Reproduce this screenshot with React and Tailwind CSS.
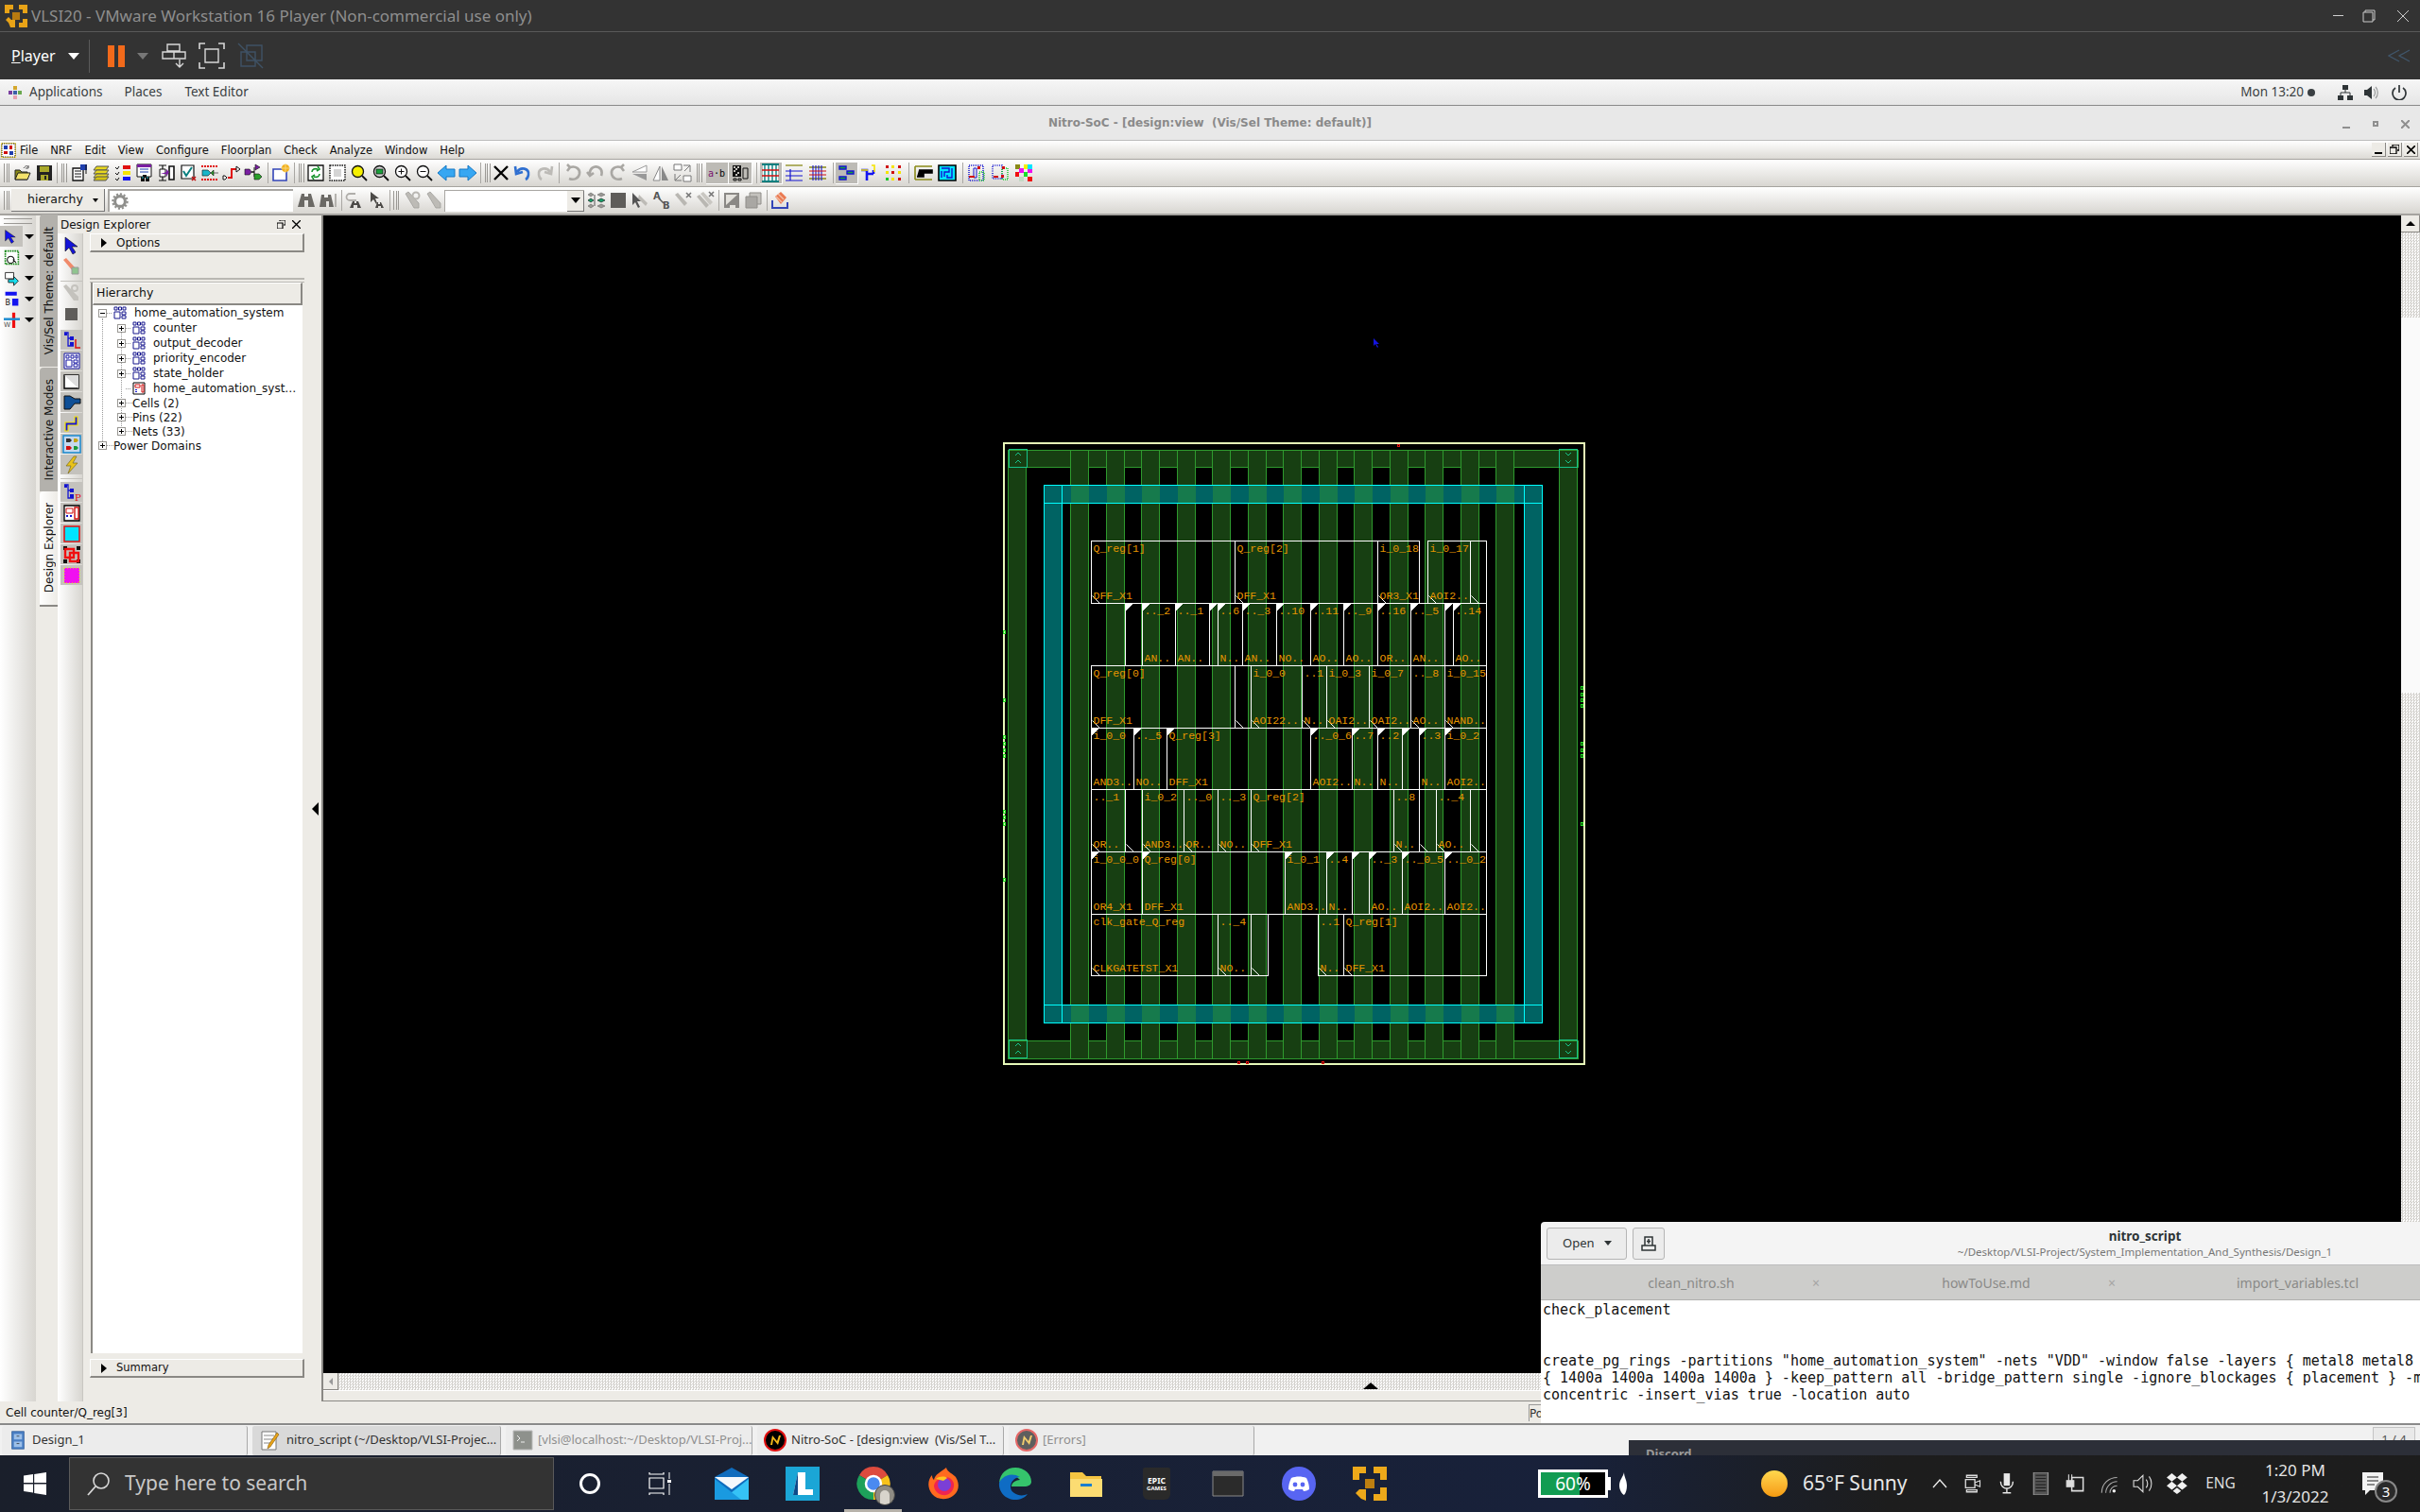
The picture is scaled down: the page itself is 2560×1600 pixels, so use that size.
// Nitro-SoC floorplan view running inside VMware Player, on a Windows desktop

const Svg = ({ s = 20, vb = "0 0 20 20", children, className = "" }) => (
  <svg width={s} height={s} viewBox={vb} className={`shrink-0 ${className}`}>{children}</svg>
);

const Lens = ({ fill = "#fff" }) => (
  <>
    <circle cx="8.5" cy="8.5" r="6" fill={fill} stroke="#111" strokeWidth="1.3" />
    <path d="M13 13l5 5" stroke="#111" strokeWidth="1.8" />
  </>
);

const Pencil = ({ c = "#bdbbb6" }) => (
  <path d="M3 3l3-2 11 12v5h-5z" fill={c} stroke="#a09e9a" strokeWidth="0.8" />
);

const tb = {
  open: <><path d="M2 7h5l2 2h6v8H2z" fill="#8a8a18" stroke="#222" /><path d="M2 17l3-7h13l-3 7z" fill="#f3e26c" stroke="#222" /><path d="M11 5c2-3 4-3 5-1M16 2v3h-3" fill="none" stroke="#555" /></>,
  save: <><path d="M2 2h16v16H2z" fill="#222" /><path d="M5 3h10v6H5z" fill="#a8a82a" /><path d="M6 12h8v6H6z" fill="#a8a82a" /><path d="M10 13h2v4h-2z" fill="#222" /></>,
  props: <><path d="M3 5h11v13H3z" fill="#fff" stroke="#111" strokeWidth="1.3" /><path d="M5 8h7M5 11h7M5 14h7" stroke="#111" /><path d="M11 1h7v6h-7z" fill="#1f3fae" /><path d="M17 1v10" stroke="#111" /></>,
  layers: <><path d="M5 3h13l-3 4H2z" fill="#e8d81e" stroke="#555" /><path d="M5 7h13l-3 4H2z" fill="#e8d81e" stroke="#555" /><path d="M5 11h13l-3 4H2z" fill="#e8d81e" stroke="#555" /><path d="M5 14h13l-3 4H2z" fill="#d4c414" stroke="#555" /></>,
  list: <><path d="M2 4l2 2 2-3M2 10l2 2 2-3M2 16l2 2 2-3" fill="none" stroke="#111" /><path d="M10 2h8v4h-8z" fill="#e01010" /><path d="M10 8h8v4h-8z" fill="#f5e400" /><path d="M10 14h8v4h-8z" fill="#1414f0" /></>,
  report: <><path d="M2 1h15v13H2z" fill="#fff" stroke="#111" /><path d="M2 1h15v3H2z" fill="#7a1fa2" /><path d="M5 6h9M5 9h9" stroke="#1f3fae" /><path d="M8 12h4v3H8zM6 14h4v5H6zM11 14h4v5h-4z" fill="#111" /><path d="M7 15h2M12 15h2" stroke="#19b6c9" /></>,
  module: <><path d="M2 2h8M2 18h8M6 2v16" stroke="#111" strokeWidth="1.2" /><path d="M3 6h6v8H3z" fill="#fff" stroke="#111" /><path d="M13 3h5v14h-5z" fill="#fff" stroke="#111" strokeWidth="1.6" /><path d="M4 11h6v3l3-5-3-3v3" fill="#7a1fa2" /></>,
  check: <><path d="M3 2h13v14H3z" fill="#fff" stroke="#111" strokeWidth="1.2" /><path d="M5 8l3 5 6-9" fill="none" stroke="#087f7f" strokeWidth="2" /><path d="M14 14l4 4m0-4l-4 4" stroke="#c01010" strokeWidth="1.5" /></>,
  clk: <><path d="M1 3h18M1 17h18" stroke="#e01010" strokeWidth="2" strokeDasharray="2 1" /><path d="M2 7h6l3 3-3 3H2z" fill="#19b6c9" stroke="#111" strokeWidth="0.6" /><path d="M11 10l3-3v6zM14 10h5" fill="#2aa02a" stroke="#111" strokeWidth="0.6" /></>,
  net: <><path d="M1 13h2l2 2-2 2H1z" fill="#fff" stroke="#111" /><path d="M6 15h4V6h6" fill="none" stroke="#e01010" strokeWidth="2" /><path d="M15 3l4 3-4 3z" fill="#fff" stroke="#111" /></>,
  gates: <><path d="M12 1l5 3-5 3z" fill="#7a1fa2" stroke="#111" strokeWidth="0.6" /><path d="M1 6h5l2 3-2 3H1z" fill="#7a1fa2" stroke="#111" strokeWidth="0.6" /><path d="M8 9h3V4M8 9h3v5" fill="none" stroke="#111" /><path d="M11 11h5l3 3-3 3h-5z" fill="#2aa02a" stroke="#111" strokeWidth="0.6" /></>,
  newobj: <><path d="M2 6h14v12H2z" fill="#fff" stroke="#3345b8" strokeWidth="1.6" /><circle cx="15" cy="5" r="4" fill="#f2b01e" /><path d="M15 0v10M10 5h10" stroke="#f7d67a" /></>,
  sync: <><path d="M2 2h16v16H2z" fill="#fff" stroke="#111" strokeWidth="1.3" /><path d="M6 9c0-3 3-4 6-3M12 3l2 3-3 2M14 11c0 3-3 4-6 3M8 17l-2-3 3-2" fill="none" stroke="#14932a" strokeWidth="1.6" /></>,
  chip: <><path d="M2 2h16v16H2z" fill="#fff" stroke="#111" strokeWidth="1.4" strokeDasharray="1.5 1" /><path d="M6 6h8v8H6z" fill="#d4d4d4" /></>,
  zy: <Lens fill="#f5f000" />,
  zg: <><Lens fill="#d8d8d8" /><path d="M5 6h7v5H5z" fill="#19a03a" stroke="#111" strokeWidth="0.7" /></>,
  zi: <><Lens /><path d="M5.5 8.5h6M8.5 5.5v6" stroke="#111" /></>,
  zo: <><Lens /><path d="M5.5 8.5h6" stroke="#111" /></>,
  left: <path d="M1 10l9-8v4h9v8h-9v4z" fill="#37a7f2" stroke="#1778c4" />,
  right: <path d="M19 10l-9-8v4H1v8h9v4z" fill="#37a7f2" stroke="#1778c4" />,
  x: <path d="M3 3l14 14M17 3L3 17" stroke="#000" strokeWidth="2.4" />,
  undo: <path d="M4 9c4-6 13-4 12 3-.3 2-1 4-3 5M2 3l1 8 7-2" fill="none" stroke="#2f6fd0" strokeWidth="2.6" />,
  redo: <path d="M16 9C12 3 3 5 4 12c.3 2 1 4 3 5M18 3l-1 8-7-2" fill="none" stroke="#bcbab6" strokeWidth="2.6" />,
  rot1: <path d="M6 4c6-2 11 2 10 7s-6 7-11 5M3 1l3 3-3 4" fill="none" stroke="#a9a7a3" strokeWidth="2.6" />,
  rot2: <path d="M4 12C3 5 9 2 13 4s4 6 3 9M1 9l3 4 4-3" fill="none" stroke="#a9a7a3" strokeWidth="2.6" />,
  rot3: <path d="M14 4C8 2 3 6 4 11s6 7 11 5M17 1l-3 3 3 4" fill="none" stroke="#a9a7a3" strokeWidth="2.6" />,
  flipv: <><path d="M18 2L3 9h15z" fill="#fff" stroke="#999" /><path d="M18 18L3 11h15z" fill="#999" /></>,
  fliph: <><path d="M9 3L2 18h7z" fill="#fff" stroke="#888" /><path d="M11 3l7 15h-7z" fill="#888" /></>,
  resize: <><path d="M1 1h8v6H1zM11 13h8v6h-8z" fill="#fff" stroke="#777" /><path d="M11 2h7v7M18 2l-6 6M2 11v7h7M2 18l6-6" fill="none" stroke="#777" /></>,
  ab: <text x="10" y="14" textAnchor="middle" fontFamily="'DejaVu Sans Mono',monospace" fontSize="10" fill="#000"><tspan fill="#7a1070">a</tspan>·b</text>,
  cell: <><path d="M2 2h9v12H2z" fill="#111" strokeDasharray="1 1" /><path d="M3 3h2v2H3zM7 3h2v2H7zM5 5h2v2H5zM3 7h2v2H3zM7 9h2v2H7zM5 11h2v2H5z" fill="#c4c2bd" /><path d="M13 5h5v11h-5zM3 16h3v2H3zM8 16h3v2H8z" fill="none" stroke="#111" /></>,
  grid: <><path d="M2 1h16v18H2z" fill="#fff" /><path d="M4 1v18M8 1v18M12 1v18M16 1v18" stroke="#087f7f" strokeWidth="1.4" /><path d="M1 1h18M1 19h18" stroke="#087f7f" strokeWidth="2" /><path d="M1 7h18M1 13h18" stroke="#d01010" strokeWidth="1.3" /></>,
  routes: <><path d="M1 2h18" stroke="#8a8a18" strokeWidth="1.3" /><path d="M1 8h5V6M6 8h13M1 13h18M1 18h18M6 8v10" fill="none" stroke="#1414d0" strokeWidth="1.2" /></>,
  ww: <><path d="M1 4h18M1 16h18" stroke="#8a8a18" strokeWidth="1.3" /><path d="M5 2v16M8 2v16M11 2v16M14 2v16" stroke="#1414d0" strokeWidth="1.1" /><path d="M1 8h18M1 12h18" stroke="#d01010" strokeWidth="1" /></>,
  conn: <><path d="M3 3h7v3H3zM11 8h7v3h-7zM3 14h7v3H3z" fill="#19a03a" stroke="#1414d0" strokeWidth="1.4" /></>,
  wire: <><path d="M1 7h6v11M7 11h7M14 11V7" fill="none" stroke="#1414f0" strokeWidth="2.6" /><path d="M12 2h3v7M1 7h7" fill="none" stroke="#f5e400" strokeWidth="1.6" /></>,
  dots: <><path d="M2 2h3v3H2zM15 2h3v3h-3zM8 8h3v3H8zM15 15h3v3h-3z" fill="#d01010" /><path d="M8 2h3v3H8zM2 8h3v3H2zM15 8h3v3h-3zM8 15h3v3H8z" fill="#f5e400" /><path d="M2 15h3v3H2z" fill="#19c82a" /></>,
  pg: <><path d="M1 3h18M1 17h18M1 3v14" fill="none" stroke="#8a8a18" strokeWidth="1.6" /><path d="M5 7h14v3H10v4H3" fill="#000" stroke="#000" strokeWidth="1.6" /></>,
  maze: <><path d="M1 2h18v16H1z" fill="#00e5ff" stroke="#000" strokeWidth="1.6" /><path d="M4 5h8v4H7v5M15 5v10H10V12M4 8v7" fill="none" stroke="#1414d0" strokeWidth="1.4" /></>,
  d1: <><path d="M2 2h15v16H2z" fill="none" stroke="#1414d0" strokeWidth="1.5" strokeDasharray="1 1" /><path d="M7 5h3v10H7z" fill="none" stroke="#1414d0" /><path d="M2 13h6v2H2zM11 3h3v3h-3z" fill="#d01010" /><path d="M13 9h5v9h-5z" fill="none" stroke="#19c82a" strokeDasharray="1 1" strokeWidth="1.5" /></>,
  d2: <><path d="M2 2h10v14H2z" fill="none" stroke="#1414d0" strokeWidth="1.5" strokeDasharray="1 1.3" /><path d="M12 5h6v12h-6z" fill="none" stroke="#19c82a" strokeWidth="1.5" strokeDasharray="1 1" /><path d="M12 3h3v3h-3zM3 13h5v2H3zM11 12h3v3h-3z" fill="#d01010" /></>,
  colors: <><path d="M1 1h5v5H1z" fill="#8a8a18" /><path d="M10 1h4v5h-4z" fill="#f5f000" /><path d="M14 1h5v5h-5z" fill="#00e5ff" /><path d="M5 5h5v5H5zM14 6h5v4h-5z" fill="#f010f0" /><path d="M1 9h4v5H1zM14 14h5v5h-5z" fill="#f01010" /><path d="M10 9h4v5h-4z" fill="#19e02a" /><path d="M5 14h5v5H5z" fill="#c4d8c4" /></>,
  gear: <><circle cx="10" cy="10" r="6" fill="none" stroke="#8f8f8c" strokeWidth="3.4" /><circle cx="10" cy="10" r="8.5" fill="none" stroke="#8f8f8c" strokeWidth="2.4" strokeDasharray="2.4 2" /></>,
  bin: <path d="M5 3h3v3h4V3h3l4 14h-7v-7H8v7H1z" fill="#6b6965" />,
  bin2: <><path d="M3 4h3v3h4V4h3l3 13h-5v-6H8v6H1z" fill="#6b6965" /><path d="M17 3h2v14h-2z" fill="#b4b2ae" /></>,
  loopb: <><path d="M11 3H5a3 3 0 000 7h7" fill="none" stroke="#b0aeaa" strokeWidth="1.8" /><path d="M8 11h2v2h2v-2h2l3 7h-4v-3h-4v3H5z" fill="#4c4a47" /></>,
  arrb: <><path d="M3 1v11l3-3 3 5 1-1-2-5h4z" fill="#4c4a47" /><path d="M10 12h1v2h2v-2h1l3 6h-3v-2h-3v2H8z" fill="#4c4a47" /></>,
  pg1: <><Pencil /><circle cx="14" cy="5" r="3.5" fill="none" stroke="#b9b7b2" strokeWidth="2" /></>,
  pg2: <Pencil />,
  neteye: <><path d="M1 4l3-2 3 2-3 2zM11 4l4-2 4 2-4 2zM1 16l3-2 3 2-3 2zM11 16l4-2 4 2-4 2z" fill="#9a9894" stroke="#555" strokeWidth="0.5" /><path d="M1 10l3-2 3 2-3 2z" fill="#19a06a" stroke="#111" strokeWidth="0.6" /><path d="M11 10l4-2 4 2-4 2z" fill="#19a06a" stroke="#111" strokeWidth="0.6" /><path d="M8 4v12" stroke="#555" /></>,
  stop: <path d="M2 2h16v16H2z" fill="#5f5d5a" />,
  selp: <><path d="M9 4l9 9-2 3-8-8z" fill="#bdbbb6" /><path d="M2 2v13l3-3 3 6 2-1-3-6h4z" fill="#555" /></>,
  abt: <><text x="1" y="9" fontSize="10" fontWeight="700" fill="#555" fontFamily="'DejaVu Sans',sans-serif">A</text><text x="11" y="19" fontSize="10" fontWeight="700" fill="#555" fontFamily="'DejaVu Sans',sans-serif">B</text><path d="M7 8l5 5" stroke="#555" strokeWidth="1.4" /></>,
  px: <><path d="M1 4l3-2 10 11-3 3z" fill="#b9b7b2" /><path d="M13 2l5 5m0-5l-5 5" stroke="#777" strokeWidth="1.6" /></>,
  pxx: <><path d="M1 6l3-2 10 11-3 3z" fill="#b9b7b2" /><path d="M5 3l3-2 10 11-3 3z" fill="#c9c7c2" /><path d="M14 1l5 5m0-5l-5 5" stroke="#777" strokeWidth="1.6" /></>,
  sg: <><path d="M2 2h16v16H2z" fill="#8a8885" /><path d="M4 4h12L4 15z" fill="#e4e2dd" /><path d="M8 15h6v3H8z" fill="#e4e2dd" /></>,
  cg: <><path d="M6 2h12v12H6z" fill="#c4c2bd" stroke="#8f8d89" /><path d="M2 6h12v12H2z" fill="#a9a7a3" stroke="#8f8d89" /></>,
  paint: <><path d="M2 10v8h16v-6" fill="none" stroke="#3345b8" strokeWidth="2" /><path d="M5 6l6-5 6 6-6 7z" fill="#ea7a52" /><path d="M8 3l6 6M6 6l6 6" stroke="#f2c0a8" strokeWidth="1.3" /></>,
};

const Ic = ({ n, on = false, className = "w-[23px]" }) => (
  <div className={`h-[23px] flex items-center justify-center shrink-0 ${className} ${on ? "bg-[#bdbbb6] border-r border-b border-white" : ""}`}>
    <Svg>{tb[n]}</Svg>
  </div>
);

const Handle = ({ className = "" }) => (
  <div className={`h-[20px] w-[6px] shrink-0 flex justify-between border-x border-[#9a9894] ${className}`}>
    <div className="w-px h-full bg-[#9a9894] mx-auto" />
  </div>
);

const VSep = ({ className = "" }) => <div className={`w-px h-[22px] bg-[#a9a7a3] shrink-0 ${className}`} />;

const menus = ["File", "NRF", "Edit", "View", "Configure", "Floorplan", "Check", "Analyze", "Window", "Help"];

function Vmware() {
  return (
    <div className="bg-[#333333] font-['Noto_Sans',sans-serif] shrink-0">
      <div className="h-[34px] flex items-center pl-[4px] border-b border-[#595959]">
        <Svg s={26} vb="0 0 26 26">
          <path d="M1 1h9v5H6v4H1zM25 1h-9v5h4v4h5zM25 25h-9v-5h4v-4h5zM7 25h5v-8H8l-3-3-3 3 3 3z" fill="#e8a317" />
          <path d="M9 9h8v8H9z" fill="#b87a10" />
        </Svg>
        <div className="ml-[3px] mt-[1px] text-[17px] text-[#8e8e8e] whitespace-nowrap">VLSI20 - VMware Workstation 16 Player (Non-commercial use only)</div>
        <div className="ml-auto flex items-center pr-[12px]">
          <div className="w-[11px] h-px bg-[#d0d0d0] mr-[20px]" />
          <Svg s={14} vb="0 0 14 14" className="mr-[23px]"><path d="M3 3V1h10v10h-2M1 3h10v10H1z" fill="none" stroke="#ccc" /></Svg>
          <Svg s={12} vb="0 0 12 12"><path d="M0 0l12 12M12 0L0 12" stroke="#ccc" /></Svg>
        </div>
      </div>
      <div className="h-[50px] flex items-center pl-[12px]">
        <span className="text-[16px] text-white w-[46px] whitespace-nowrap"><span className="underline">P</span>layer</span>
        <div className="ml-[14px] w-0 h-0 border-x-[6px] border-x-transparent border-t-[7px] border-t-white" />
        <div className="ml-[10px] w-px h-[35px] bg-[#5a5a5a]" />
        <div className="ml-[19px] w-[7px] h-[23px] bg-[#f26a1b]" />
        <div className="ml-[4px] w-[7px] h-[23px] bg-[#f26a1b]" />
        <div className="ml-[13px] w-0 h-0 border-x-[6px] border-x-transparent border-t-[7px] border-t-[#777]" />
        <Svg s={26} vb="0 0 26 26" className="ml-[14px]"><path d="M6 1h13v7H6zM1 9h12v7H1zM13 9h12v7H13zM19 17v7M15 21l4 4 4-4" fill="none" stroke="#d8d8d8" strokeWidth="1.4" /></Svg>
        <Svg s={28} vb="0 0 28 28" className="ml-[13px]"><path d="M7 1H1v6M21 1h6v6M7 27H1v-6M21 27h6v-6" fill="none" stroke="#d8d8d8" strokeWidth="1.6" /><path d="M7 7h14v14H7z" fill="none" stroke="#d8d8d8" strokeWidth="1.4" /></Svg>
        <Svg s={28} vb="0 0 28 28" className="ml-[13px]"><path d="M10 3h16v16H10zM4 10h15v15H4z" fill="none" stroke="#3f5265" strokeWidth="1.4" /><path d="M1 1l26 26" stroke="#3f5265" strokeWidth="1.4" /></Svg>
        <Svg s={24} vb="0 0 24 14" className="ml-auto mr-[10px]"><path d="M12 1L1 7l11 6M23 1L12 7l11 6" fill="none" stroke="#40566b" strokeWidth="1.3" /></Svg>
      </div>
    </div>
  );
}

function GnomeBar() {
  return (
    <div className="shrink-0">
      <div className="h-[28px] flex items-center bg-linear-to-b from-[#f6f6f6] to-[#e6e6e6] border-b border-[#8a8a8a] pl-[8px] pr-[14px] text-[13.5px] text-[#3a3f42] font-['Noto_Sans',sans-serif]">
        <Svg s={16} vb="0 0 16 16"><path d="M6 1h4v4H6z" fill="#d4a72c" /><path d="M1 6h4v4H1z" fill="#7a3fa0" /><path d="M11 6h4v4h-4z" fill="#6aa84f" /><path d="M6 11h4v4H6z" fill="#e8a0b0" /><path d="M6 6h4v4H6z" fill="#3d5fa8" /></Svg>
        <span className="ml-[7px]">Applications</span>
        <span className="ml-[23px]">Places</span>
        <span className="ml-[24px]">Text Editor</span>
        <span className="ml-auto">Mon 13:20</span>
        <div className="w-[8px] h-[8px] rounded-full bg-[#3a3f42] ml-[4px]" />
        <Svg s={16} vb="0 0 16 16" className="ml-[24px]"><path d="M5 0h6v5H5zM0 11h6v5H0zM10 11h6v5h-6z" fill="#2e3436" /><path d="M8 5v3M3 11V8h10v3" fill="none" stroke="#2e3436" /></Svg>
        <Svg s={16} vb="0 0 16 16" className="ml-[12px]"><path d="M0 5h3l5-4v14l-5-4H0z" fill="#2e3436" /><path d="M10 4c2 2 2 6 0 8M12 2c3 3 3 9 0 12" fill="none" stroke="#9a9c9c" strokeWidth="1.2" /></Svg>
        <Svg s={16} vb="0 0 16 16" className="ml-[13px]"><path d="M4 3a7 7 0 108 0M8 0v8" fill="none" stroke="#2e3436" strokeWidth="1.7" /></Svg>
      </div>
      <div className="h-[37px] relative flex items-center justify-center bg-[#e8e8e8] border-b border-[#bdbdbd] font-['DejaVu_Sans',sans-serif] text-[12px] font-bold text-[#8a8a8a] whitespace-pre">
        Nitro-SoC - [design:view  (Vis/Sel Theme: default)]
        <div className="absolute right-[11px] top-[14px] flex items-center gap-[24px]">
          <div className="w-[8px] h-[2px] bg-[#8f8f8f] mt-[8px]" />
          <div className="w-[6px] h-[6px] border-2 border-[#8f8f8f]" />
          <Svg s={9} vb="0 0 9 9"><path d="M0 0l9 9M9 0L0 9" stroke="#8f8f8f" strokeWidth="2" /></Svg>
        </div>
      </div>
    </div>
  );
}

function WinBtn({ children }) {
  return <div className="w-[15px] h-[15px] bg-[#edebe6] border-r border-b border-[#8a8884] flex items-center justify-center">{children}</div>;
}

function AppBars() {
  return (
    <div className="shrink-0 font-['DejaVu_Sans',sans-serif] text-[#111]">
      <div className="h-[20px] flex items-center bg-linear-to-b from-white to-[#dcdad5] border-b border-[#a5a39f] pl-[1px]">
        <Svg s={16} vb="0 0 16 16">
          <path d="M0 0h16v16H0z" fill="#f2dc5a" /><path d="M1 1h14v14H1z" fill="#fff" stroke="#111" strokeDasharray="1 1" /><path d="M3 3h4v4H3zM9 9h4v4H9z" fill="#1f3fae" /><path d="M9 3h3v4H9zM3 9h4v3H3z" fill="#d01010" />
        </Svg>
        <div className="flex text-[11.5px] leading-none ml-[4px] pt-[2px]">
          {menus.map((m, i) => <span key={m} className={`whitespace-nowrap ${i === 0 ? "" : "ml-[13px]"}`}>{m}</span>)}
        </div>
        <div className="ml-auto flex gap-[2px] pr-[2px]">
          <WinBtn><div className="w-[8px] h-[2px] bg-black mt-[7px]" /></WinBtn>
          <WinBtn><Svg s={10} vb="0 0 10 10"><path d="M3 2V0h7v6H8M0 3h7v7H0z" fill="none" stroke="#000" strokeWidth="1.3" /></Svg></WinBtn>
          <WinBtn><Svg s={9} vb="0 0 9 9"><path d="M0 0l9 9M9 0L0 9" stroke="#000" strokeWidth="1.6" /></Svg></WinBtn>
        </div>
      </div>
      <div className="h-[29px] flex items-center bg-linear-to-b from-white to-[#d8d6d1] border-b border-[#a5a39f] pl-[4px]">
        <Handle />
        <div className="w-px ml-[1.5px]" />
        <Ic n="open" /><Ic n="save" />
        <VSep className="ml-[1px]" />
        <Handle className="ml-[4px]" />
        <Ic n="props" className="w-[23px] ml-[2px]" /><Ic n="layers" /><Ic n="list" /><Ic n="report" /><Ic n="module" /><Ic n="check" /><Ic n="clk" /><Ic n="net" /><Ic n="gates" />
        <VSep className="ml-[3px] mr-[2px]" /><Ic n="newobj" />
        <VSep className="ml-[2px]" />
        <Handle className="ml-[4px]" />
        <Ic n="sync" className="w-[23px] ml-[1px]" /><Ic n="chip" /><Ic n="zy" /><Ic n="zg" /><Ic n="zi" /><Ic n="zo" /><Ic n="left" /><Ic n="right" />
        <VSep className="ml-[1px]" />
        <Handle className="ml-[4px]" />
        <Ic n="x" /><Ic n="undo" /><Ic n="redo" />
        <VSep className="ml-[3px] mr-[4px]" />
        <Ic n="rot1" /><Ic n="rot2" /><Ic n="rot3" /><Ic n="flipv" /><Ic n="fliph" /><Ic n="resize" />
        <Handle className="ml-[3px]" />
        <Ic n="ab" on className="w-[24px] ml-[4px]" /><Ic n="cell" on className="w-[25px]" />
        <VSep className="ml-[4px] mr-[3px]" />
        <Ic n="grid" on className="w-[24px]" /><Ic n="routes" className="w-[25px]" /><Ic n="ww" className="w-[25px]" />
        <VSep className="ml-[3px] mr-[2px]" />
        <Ic n="conn" on className="w-[24px]" /><Ic n="wire" className="w-[25px]" /><Ic n="dots" className="w-[25px]" />
        <VSep className="ml-[3px] mr-[3px]" />
        <Ic n="pg" className="w-[25px]" /><Ic n="maze" className="w-[25px]" />
        <VSep className="ml-[3px] mr-[2px]" />
        <Ic n="d1" className="w-[25px]" /><Ic n="d2" className="w-[25px]" /><Ic n="colors" className="w-[25px]" />
      </div>
      <div className="h-[30px] flex items-center bg-linear-to-b from-white to-[#d8d6d1] border-b-2 border-[#a5a39f] pl-[4px]">
        <Handle />
        <div className="ml-[2px] w-[99px] h-[24px] bg-[#edebe6] border-r border-b border-[#777] flex items-center text-[12.5px] pl-[17px] pr-[6px]">
          <span>hierarchy</span>
          <div className="ml-auto w-0 h-0 border-x-[3px] border-x-transparent border-t-[4px] border-t-black" />
        </div>
        <div className="ml-[3px] w-[196px] h-[24px] bg-white border-t-2 border-l-2 border-[#a9a7a3] flex items-center pl-[2px]">
          <Svg s={18}>{tb.gear}</Svg>
        </div>
        <Ic n="bin" className="w-[23px] ml-[2px]" /><Ic n="bin2" />
        <VSep className="ml-[3px]" />
        <Ic n="loopb" className="w-[25px]" /><Ic n="arrb" className="w-[24px]" />
        <VSep className="ml-[1px]" />
        <Handle className="ml-[3px]" />
        <Ic n="pg1" className="w-[23px] ml-[2px]" /><Ic n="pg2" />
        <div className="w-[148px] h-[23px] bg-white border-t border-l border-[#a9a7a3] flex justify-end">
          <div className="w-[18px] bg-[#edebe6] border-r border-b border-[#777] flex items-center justify-center">
            <div className="w-0 h-0 border-x-[5px] border-x-transparent border-t-[6px] border-t-black" />
          </div>
        </div>
        <Ic n="neteye" className="w-[25px]" /><Ic n="stop" className="w-[22px]" /><Ic n="selp" /><Ic n="abt" /><Ic n="px" /><Ic n="pxx" />
        <VSep className="ml-[3px]" />
        <Ic n="sg" className="w-[23px] ml-[1px]" /><Ic n="cg" />
        <VSep className="ml-[3px]" />
        <Ic n="paint" className="w-[25px]" />
      </div>
    </div>
  );
}

const sideTools = [
  <><path d="M2 2v14l4-4 4 7 3-2-4-6h6z" fill="#1414f0" stroke="#111" strokeWidth="0.6" /></>,
  <><path d="M2 2h17v17H2z" fill="#fff" stroke="#1a8a1a" strokeDasharray="2 1" strokeWidth="2" /><path d="M9 9a4.5 4.5 0 10.01 0M12 13l4 4" fill="none" stroke="#111" strokeWidth="1.3" /></>,
  <><path d="M2 3h11v8H2z" fill="#fff" stroke="#111" /><path d="M6 12h7V8l6 6-6 6v-4H6z" fill="#19e0f0" stroke="#111" /></>,
  <><path d="M2 1h15v5H2zM11 10h8v9h-8z" fill="#1414f0" /><text x="2" y="18" fontSize="10" fill="#111" fontFamily="'DejaVu Sans',sans-serif">B</text></>,
  <><path d="M11 1h4v20h-4z" fill="#f01010" /><path d="M0 8h21v3H0z" fill="#1a8ad0" /><text x="0" y="20" fontSize="9" fill="#555" fontFamily="'DejaVu Sans',sans-serif">W</text></>,
];

const exPlain = [
  <path d="M3 1v15l4-4 4 7 3-2-4-6h6z" fill="#1414d8" stroke="#111" strokeWidth="0.6" />,
  <><path d="M1 3l3-2 11 12-3 3z" fill="#f08a6a" /><path d="M10 11h7v7h-7z" fill="#8fc48f" stroke="#999" /></>,
  <><path d="M1 3l3-2 13 13v4h-5z" fill="#c4c2bd" /><circle cx="13" cy="5" r="3" fill="none" stroke="#c4c2bd" strokeWidth="2" /></>,
  <path d="M3 3h13v13H3z" fill="#5f5d5a" />,
];

const exBoxed = [
  <><path d="M2 2h4v14h6M6 8h6" fill="none" stroke="#1414d0" strokeWidth="1.3" /><path d="M2 2h3v3H2zM8 6h4v4H8zM8 12h4v4H8z" fill="#1414d0" /><path d="M14 9v9h5" fill="none" stroke="#e01010" strokeWidth="1.5" /></>,
  <><path d="M2 2h16v16H2z" fill="#fff" stroke="#1414a0" /><path d="M4 4h3v3H4zM9 4h3v3H9zM14 4h2v3h-2zM4 9h6v7H4zM12 9h4v3h-4zM12 13h4v3h-4z" fill="none" stroke="#1414a0" /></>,
  <><path d="M2 3h15v14H2z" fill="#fff" stroke="#000" strokeWidth="1.4" /><path d="M2 3l15 14V3z" fill="#ddd" /></>,
  <path d="M2 3h6l5 3h6v5h-6l-5 6H2z" fill="#0f4f96" stroke="#111" />,
  <path d="M3 18V9h10V3h3v9H6v6z" fill="#1414e0" stroke="#f5e400" strokeWidth="1.2" />,
  <><path d="M1 1h18v18H1z" fill="#c5d8ee" stroke="#1a8ad0" strokeWidth="1.5" /><path d="M4 4h4l2 2-2 2H4z" fill="#333" /><path d="M12 4h3l2 2-2 2h-3z" fill="#c4a214" /><path d="M4 12h4l2 2-2 2H4z" fill="#d01010" /><path d="M12 12h3l2 2-2 2h-3z" fill="#1a9a3a" /></>,
  <path d="M12 1L4 11h5l-3 8 10-11h-5l4-7z" fill="#e8c21a" stroke="#7a6a1a" strokeWidth="0.7" />,
];

const exBoxed2 = [
  <><path d="M2 2h4v14h6M6 8h6" fill="none" stroke="#1414d0" strokeWidth="1.3" /><path d="M2 2h3v3H2zM8 6h4v4H8zM8 12h4v4H8z" fill="#1414d0" /><text x="13" y="19" fontSize="10" fill="#e01010" fontFamily="'DejaVu Serif',serif">P</text></>,
  <><path d="M2 2h16v16H2z" fill="#fff" stroke="#000" strokeWidth="1.3" /><path d="M4 5h7v5H4z" fill="none" stroke="#d01010" /><path d="M13 4h4v12h-4z" fill="none" stroke="#d01010" strokeWidth="1.4" /><path d="M4 12h2v2H4zM8 12h2v2H8z" fill="#1414d0" /></>,
  <path d="M2 2h16v16H2z" fill="#00e5ff" stroke="#e01010" strokeWidth="1.5" />,
  <><path d="M1 1h4v4H1zM15 1h4v4h-4zM1 15h4v4H1zM15 15h4v4h-4z" fill="#111" /><path d="M3 4h9v9H3zM8 8h9v9H8z" fill="none" stroke="#f01010" strokeWidth="2.4" /></>,
  <path d="M2 2h16v16H2z" fill="#f010f0" stroke="#f5e400" strokeDasharray="1 2" />,
];

const Bevel = ({ className = "", children }) => (
  <div className={`bg-[#edebe6] border-t border-l border-white border-r-2 border-b-2 border-r-[#8a8884] border-b-[#8a8884] flex items-center ${className}`}>{children}</div>
);

const Expander = ({ open = false }) => (
  <div className="w-[9px] h-[9px] border border-[#9a9894] bg-white relative shrink-0">
    <div className="absolute left-[1px] top-[3px] w-[5px] h-px bg-black" />
    {!open && <div className="absolute left-[3px] top-[1px] w-px h-[5px] bg-black" />}
  </div>
);

const ModIcon = () => (
  <Svg s={14} vb="0 0 14 14"><path d="M1 1h3v3H1zM5.5 1h3v3h-3zM10 1h3v3h-3zM1 6h6v7H1zM9 6h4v3H9zM9 10h4v3H9z" fill="#fff" stroke="#14148c" /></Svg>
);

const TreeRow = ({ pad, exp, icon, h, children, open, leaf }) => (
  <div className={`flex items-center whitespace-nowrap ${pad} ${h}`}>
    {exp && <Expander open={open} />}
    {leaf && <div className="w-[9px]" />}
    <div className={icon ? "w-[5px] h-px mr-[1px] border-t border-dotted border-[#999]" : "w-[7px] border-t border-dotted border-[#999]"} />
    {icon && <div className="ml-[1px] mr-[8px] flex">{icon}</div>}
    <span>{children}</span>
  </div>
);

function Explorer() {
  return (
    <div className="w-[261px] h-full flex flex-col font-['DejaVu_Sans',sans-serif] text-[12px] text-[#111]">
      <div className="h-[19px] flex items-center pl-[3px] bg-[#edebe6]">
        <span>Design Explorer</span>
        <Svg s={9} vb="0 0 9 9" className="ml-auto mr-[7px]"><path d="M3 1V0h6v5H7M0 3h6v6H0z" fill="none" stroke="#000" strokeWidth="1.2" /></Svg>
        <Svg s={9} vb="0 0 9 9" className="mr-[4px]"><path d="M0 0l9 9M9 0L0 9" stroke="#000" strokeWidth="1.3" /></Svg>
      </div>
      <div className="flex-1 flex min-h-0 bg-[#edebe6]">
        <div className="w-[27px] flex flex-col items-center bg-linear-to-r from-white to-[#d8d6d1] border-r border-[#c9c7c2] pl-[3px]">
          <div className="h-[23px] mt-[1px] flex items-center"><Svg>{exPlain[0]}</Svg></div>
          <div className="h-[22px] flex items-center"><Svg>{exPlain[1]}</Svg></div>
          <div className="w-full h-px bg-[#c4c2bd] mt-[4px]" />
          <div className="h-[24px] flex items-center"><Svg>{exPlain[2]}</Svg></div>
          <div className="h-[22px] flex items-center"><Svg>{exPlain[3]}</Svg></div>
          <div className="h-[5px]" />
          {exBoxed.map((g, i) => (
            <div key={i} className="w-[23px] h-[21px] mb-px bg-[#c4c2bd] flex items-center justify-center"><Svg>{g}</Svg></div>
          ))}
          <div className="w-full h-px bg-[#c4c2bd] my-[3px]" />
          {exBoxed2.map((g, i) => (
            <div key={i} className="w-[23px] h-[21px] mb-px bg-[#c4c2bd] flex items-center justify-center"><Svg>{g}</Svg></div>
          ))}
        </div>
        <div className="flex-1 pl-[7px] flex flex-col min-w-0 pb-[25px]">
          <Bevel className="h-[20px] pl-[11px] shrink-0">
            <div className="w-0 h-0 border-y-[5px] border-y-transparent border-l-[6px] border-l-black" />
            <span className="ml-[10px]">Options</span>
          </Bevel>
          <div className="h-[29px] shrink-0 border-b-2 border-[#b9b7b2]" />
          <div className="h-[3px] shrink-0 border-b border-[#b9b7b2]" />
          <div className="ml-[1px] mr-[2px] flex-1 min-h-0 flex flex-col border-l-2 border-[#8a8884] bg-white">
            <Bevel className="h-[24px] pl-[3px] shrink-0 text-[12.5px]">Hierarchy</Bevel>
            <div className="relative flex-1 pl-[6px]">
              <div className="absolute left-[10px] top-[14px] h-[136px] border-l border-dotted border-[#999]" />
              <div className="absolute left-[30px] top-[24px] h-[106px] border-l border-dotted border-[#999]" />
              <div className="relative">
                <TreeRow exp open pad="pl-0" h="h-[16px]" icon={<ModIcon />}>home_automation_system</TreeRow>
                <TreeRow exp pad="pl-[20px]" h="h-[16px]" icon={<ModIcon />}>counter</TreeRow>
                <TreeRow exp pad="pl-[20px]" h="h-[16px]" icon={<ModIcon />}>output_decoder</TreeRow>
                <TreeRow exp pad="pl-[20px]" h="h-[16px]" icon={<ModIcon />}>priority_encoder</TreeRow>
                <TreeRow exp pad="pl-[20px]" h="h-[16px]" icon={<ModIcon />}>state_holder</TreeRow>
                <TreeRow leaf pad="pl-[20px]" h="h-[16px]" icon={
                  <Svg s={14} vb="0 0 14 14"><path d="M1 1h12v12H1z" fill="#fff" stroke="#000" /><path d="M3 3h5v3H3zM10 3h2v8h-2z" fill="none" stroke="#d01010" /><path d="M3 8h2v1H3zM3 10h2v1H3z" fill="#1414d0" /></Svg>
                }>home_automation_syst…</TreeRow>
                <TreeRow exp pad="pl-[20px]" h="h-[15px]">Cells (2)</TreeRow>
                <TreeRow exp pad="pl-[20px]" h="h-[15px]">Pins (22)</TreeRow>
                <TreeRow exp pad="pl-[20px]" h="h-[15px]">Nets (33)</TreeRow>
                <TreeRow exp pad="pl-0" h="h-[15px]">Power Domains</TreeRow>
              </div>
            </div>
          </div>
          <div className="h-[6px] shrink-0 bg-[#edebe6]" />
          <Bevel className="h-[20px] pl-[11px] shrink-0 text-[11.5px]">
            <div className="w-0 h-0 border-y-[5px] border-y-transparent border-l-[6px] border-l-black" />
            <span className="ml-[10px]">Summary</span>
          </Bevel>
        </div>
      </div>
    </div>
  );
}

// chip drawing, cell edges are in pixels of a 2.45x crop from x = 1050
const px = (p) => Math.round(1050 + p / 2.45) + 0.5;
const rows = [572, 638, 704, 770, 835, 901, 967, 1032];
const cellRows = [
  [[256, 626, "Q_reg[1]", "DFF_X1"], [626, 998, "Q_reg[2]", "DFF_X1"], [998, 1106, "i_0_18", "OR3_X1"], [1128, 1238, "i_0_17", "AOI2.."], [1238, 1280]],
  [[342, 386], [386, 474, ".._2", "AN.."], [474, 560, ".._1", "AN.."], [560, 582], [582, 648, "..6", "N.."], [648, 736, ".._3", "AN.."], [736, 822, "..10", "NO.."], [822, 910, "..11", "AO.."], [910, 998, ".._9", "AO.."], [998, 1084, "..16", "OR.."], [1084, 1172, ".._5", "AN.."], [1172, 1194], [1194, 1280, "..14", "AO.."]],
  [[256, 626, "Q_reg[0]", "DFF_X1"], [626, 670], [670, 800, "i_0_0", "AOI22.."], [800, 866, "..1", "N.."], [866, 976, "i_0_3", "OAI2.."], [976, 1084, "i_0_7", "OAI2.."], [1084, 1172, ".._8", "AO.."], [1172, 1280, "i_0_15", "NAND.."]],
  [[256, 364, "i_0_0", "AND3.."], [364, 452, ".._5", "NO.."], [452, 822, "Q_reg[3]", "DFF_X1"], [822, 932, ".._0_6", "AOI2.."], [932, 998, "..7", "N.."], [998, 1062, "..2", "N.."], [1062, 1106], [1106, 1172, "..3", "N.."], [1172, 1280, "i_0_2", "AOI2.."]],
  [[256, 342, ".._1", "OR.."], [342, 386], [386, 496, "i_0_2", "AND3.."], [496, 582, ".._0", "OR.."], [582, 670, ".._3", "NO.."], [670, 1040, "Q_reg[2]", "DFF_X1"], [1040, 1106, "..8", "N.."], [1106, 1150], [1150, 1238, ".._4", "AO.."], [1238, 1280]],
  [[256, 386, "i_0_0_0", "OR4_X1"], [386, 758, "Q_reg[0]", "DFF_X1"], [758, 866, "i_0_1", "AND3.."], [866, 932, "..4", "N.."], [932, 976], [976, 1062, ".._3", "AO.."], [1062, 1172, ".._0_5", "AOI2.."], [1172, 1280, ".._0_2", "AOI2.."]],
  [[256, 582, "clk_gate_Q_reg", "CLKGATETST_X1"], [582, 670, ".._4", "NO.."], [670, 714], [844, 910, "..1", "N.."], [910, 1280, "Q_reg[1]", "DFF_X1"]],
];
const stripes = Array.from({ length: 13 }, (_, i) => Math.round(1132 + 37.5 * i) + 0.5);
const pinsG = [[1061, 667], [1061, 739], [1061, 778], [1061, 785], [1061, 792], [1061, 798], [1061, 857], [1061, 863], [1061, 870], [1061, 929], [1672, 726], [1672, 733], [1672, 739], [1672, 745], [1672, 785], [1672, 792], [1672, 798], [1672, 870]];
const pinsR = [[1478, 470], [1309, 1123], [1318, 1123], [1398, 1123]];
const via = ["1067 475", "1649 475", "1067 1100", "1649 1100"];

function Chip() {
  return (
    <svg width="640" height="680" viewBox="1050 460 640 680" shapeRendering="crispEdges" className="shrink-0">
      <rect x="1061.5" y="468.5" width="614" height="657" fill="none" stroke="#e6f8b8" strokeWidth="2" />
      <path d="M1066.5 476.5h603v18h-603zM1066.5 1101.5h603v19h-603zM1066.5 494.5h19v607h-19zM1649.5 494.5h19v607h-19z" fill="#173f12" stroke="#2e9a2e" />
      {stripes.map((x) => <rect key={x} x={x} y="476.5" width="19" height="644" fill="#173f12" stroke="#2e9a2e" />)}
      <path d="M1104.5 513.5h527v19h-527zM1104.5 1063.5h527v19h-527zM1104.5 532.5h19v531h-19zM1612.5 532.5h19v531h-19z" fill="#006363" stroke="#00ffff" />
      <path d="M1123.5 513.5v19M1612.5 513.5v19M1123.5 1063.5v19M1612.5 1063.5v19" stroke="#00ffff" />
      {stripes.map((x) => (
        <g key={x} fill="#167a4c">
          <rect x={x} y="514" width="19" height="18" />
          <rect x={x} y="1064" width="19" height="18" />
        </g>
      ))}
      {via.map((v, i) => {
        const [x, y] = v.split(" ").map(Number);
        const up = i % 2 === 0;
        return (
          <g key={v} fill="none">
            <rect x={x + 0.5} y={y + 0.5} width="19" height="19" stroke="#17c38a" />
            <path d={up ? `M${x + 7} ${y + 7}l3-3 3 3M${x + 7} ${y + 15}l3-3 3 3` : `M${x + 7} ${y + 4}l3 3 3-3M${x + 7} ${y + 12}l3 3 3-3`} stroke="#17c38a" />
          </g>
        );
      })}
      {pinsG.map(([x, y], i) => <rect key={i} x={x + 0.5} y={y + 0.5} width="2" height="3" fill="none" stroke="#22e022" />)}
      {pinsR.map(([x, y], i) => <rect key={i} x={x + 0.5} y={y + 0.5} width="2" height="2" fill="none" stroke="#e01010" />)}
      {cellRows.map((cells, r) =>
        cells.map(([a, b], i) => {
          const l = px(a), rr = px(b), t = rows[r] + 0.5, btm = rows[r + 1] + 0.5;
          return (
            <g key={`${r}-${i}`}>
              <rect x={l} y={t} width={rr - l} height={btm - t} fill="none" stroke="#fff" />
              {r % 2 === 1
                ? <path d={`M${l} ${t}h8l-8 8z`} fill="#fff" />
                : <path d={`M${l + 1} ${btm - 8}l8 8`} stroke="#fff" fill="none" shapeRendering="auto" />}
            </g>
          );
        })
      )}
      <g fontFamily="'Liberation Mono',monospace" fontSize="11.5" fill="#e69500" shapeRendering="auto">
        {cellRows.map((cells, r) =>
          cells.map(([a, , top, bot], i) => top && (
            <g key={`${r}-${i}`}>
              <text x={px(a) + 2} y={rows[r] + 12}>{top}</text>
              <text x={px(a) + 2} y={rows[r + 1] - 4}>{bot}</text>
            </g>
          ))
        )}
      </g>
    </svg>
  );
}

function Editor() {
  return (
    <div className="absolute left-[1630px] top-[1293px] w-[930px] h-[213px] rounded-tl-[4px] overflow-hidden flex flex-col font-['Noto_Sans',sans-serif]">
      <div className="h-[46px] shrink-0 bg-[#f4f4f4] border-b border-[#bdbdbd] relative flex items-center pl-[6px] gap-[6px]">
        <div className="w-[85px] h-[34px] rounded-[3px] border border-[#b5b5b5] bg-[#ececec] flex items-center pl-[16px] text-[13px] text-[#2e3436]">
          Open
          <div className="ml-[10px] w-0 h-0 border-x-[4px] border-x-transparent border-t-[5px] border-t-[#2e3436]" />
        </div>
        <div className="w-[34px] h-[34px] rounded-[3px] border border-[#b5b5b5] bg-[#ececec] flex items-center justify-center">
          <Svg s={16} vb="0 0 16 16"><path d="M4 1h8v9H4zM1 10h14v5H1zM8 3v5M6 5.5h4" fill="none" stroke="#2e3436" strokeWidth="1.5" /></Svg>
        </div>
        <div className="absolute left-[439px] w-[400px] top-[6px] flex flex-col items-center">
          <span className="text-[13.5px] font-bold leading-[18px] text-[#2e3436]">nitro_script</span>
          <span className="text-[11.5px] leading-[16px] text-[#777] whitespace-nowrap">~/Desktop/VLSI-Project/System_Implementation_And_Synthesis/Design_1</span>
        </div>
      </div>
      <div className="h-[37px] shrink-0 bg-[#cdcdcb] border-b border-[#b0b0ae] flex items-center text-[14px] text-[#8a8a88]">
        <div className="w-[318px] flex justify-center relative">
          <span>clean_nitro.sh</span>
          <span className="absolute left-[287px] text-[#a5a5a3]">×</span>
        </div>
        <div className="w-[306px] flex justify-center relative">
          <span>howToUse.md</span>
          <span className="absolute left-[282px] text-[#a5a5a3]">×</span>
        </div>
        <div className="w-[306px] pl-[112px] whitespace-nowrap">import_variables.tcl</div>
      </div>
      <div className="flex-1 bg-white pl-[2px] pt-[1px] font-['DejaVu_Sans_Mono',monospace] text-[15px] leading-[18px] text-[#111] whitespace-pre overflow-hidden">
        <div>check_placement</div>
        <div>&nbsp;</div>
        <div>&nbsp;</div>
        <div>{'create_pg_rings -partitions "home_automation_system" -nets "VDD" -window false -layers { metal8 metal8'}</div>
        <div>{'{ 1400a 1400a 1400a 1400a } -keep_pattern all -bridge_pattern single -ignore_blockages { placement } -m'}</div>
        <div>concentric -insert_vias true -location auto</div>
      </div>
    </div>
  );
}

const Nitro = ({ dim = false }) => (
  <Svg s={24} vb="0 0 24 24" className={dim ? "opacity-60" : ""}>
    <circle cx="12" cy="12" r="11" fill="#000" stroke="#e01010" strokeWidth="2" />
    <path d="M7 17l2-10 5 6 2-6h2l-3 10-5-6-1 6z" fill="#f5b81a" />
  </Svg>
);

const taskItems = [
  { t: "Design_1", c: "text-[#333]", w: "w-[260px]", ic: <Svg s={20} vb="0 0 20 28"><path d="M1 1h18v26H1z" fill="#4a7fc4" stroke="#2f5a96" /><path d="M4 5h12v8H4zM4 16h12v8H4z" fill="#9dc0e8" /><path d="M8 8h4M8 19h4" stroke="#222" /></Svg> },
  { t: "nitro_script (~/Desktop/VLSI-Projec...", c: "text-[#333]", w: "w-[263px]", active: true, ic: <Svg s={24} vb="0 0 24 24"><path d="M3 3h15v19H3z" fill="#fff" stroke="#777" /><path d="M5 7h11M5 11h11M5 15h8" stroke="#888" /><path d="M21 6l-9 13-3 2 1-4 9-13z" fill="#e8a317" stroke="#7a5510" strokeWidth="0.6" /></Svg> },
  { t: "[vlsi@localhost:~/Desktop/VLSI-Proj...", c: "text-[#8f8f8f]", w: "w-[261px]", ic: <Svg s={22} vb="0 0 22 22"><path d="M1 1h20v20H1z" fill="#8e918c" stroke="#bbb" /><path d="M5 6l3 3-3 3M9 13h4" fill="none" stroke="#eee" /></Svg> },
  { t: "Nitro-SoC - [design:view  (Vis/Sel T...", c: "text-[#333]", w: "w-[261px]", ic: <Nitro /> },
  { t: "[Errors]", c: "text-[#8f8f8f]", w: "w-[260px]", ic: <Nitro dim /> },
];

function Slot({ children, bar }) {
  return (
    <div className="w-[75px] h-full flex items-center justify-center relative">
      {children}
      {bar && <div className="absolute bottom-0 left-[7px] right-[7px] h-[3px] bg-[#b7b2aa]" />}
    </div>
  );
}

const Tray = ({ children }) => (
  <div className="w-[36px] flex justify-center"><Svg s={24} vb="0 0 22 22">{children}</Svg></div>
);

function Taskbars() {
  return (
    <>
      <div className="h-[34px] shrink-0 bg-[#f1f1f1] border-t-2 border-[#8a8a8a] flex items-center pl-[2px] gap-[5px] relative font-['Noto_Sans',sans-serif] text-[13px]">
        {taskItems.map((it) => (
          <div key={it.t} className={`h-[31px] shrink-0 flex items-center gap-[5px] pl-[7px] rounded-[2px] border-r border-[#a9a9a9] whitespace-pre overflow-hidden ${it.w} ${it.c} ${it.active ? "bg-[#d9d9d9]" : "bg-[#ececec]"}`}>
            {it.ic}
            <span>{it.t}</span>
          </div>
        ))}
        <div className="absolute right-[5px] top-[2px] w-[45px] h-[30px] border border-[#c4c4c4] bg-[#e9e9e9] text-center text-[#555] text-[13px] leading-[24px]">1 / 4</div>
        <div className="absolute left-[1723px] right-0 top-[16px] bottom-0 overflow-hidden bg-[#2c2f38] pl-[18px] text-[13px] font-bold text-[#9a9a9a] leading-[28px]">Discord</div>
      </div>
      <div className="h-[60px] shrink-0 flex items-center bg-linear-to-r from-[#1a1f2b] via-[#18213a] via-65% to-[#1d1d1d] to-78% relative font-['Noto_Sans',sans-serif] text-white">
        <div className="w-[73px] flex justify-center">
          <Svg s={24} vb="0 0 24 24"><path d="M0 3.5l10-1.4V11H0zM11.2 2L24 0v11H11.2zM0 12.5h10v9L0 20zM11.2 12.5H24V24l-12.8-2z" fill="#fff" /></Svg>
        </div>
        <div className="w-[513px] h-[56px] bg-[#333333] border border-[#5a5a5a] flex items-center pl-[16px]">
          <Svg s={28} vb="0 0 28 28"><circle cx="17" cy="11" r="8" fill="none" stroke="#d8d8d8" strokeWidth="1.6" /><path d="M11 17L3 26" stroke="#d8d8d8" strokeWidth="1.8" /></Svg>
          <span className="ml-[14px] text-[21px] text-[#c8c8c8]">Type here to search</span>
        </div>
        <Slot><div className="w-[22px] h-[22px] rounded-full border-[3px] border-white" /></Slot>
        <Slot>
          <Svg s={26} vb="0 0 26 26"><path d="M1 1v2h15V1M1 25v-2h15v2M1 7h15v11H1z" fill="none" stroke="#fff" strokeWidth="1.2" /><path d="M22 1v7M22 13v12" stroke="#fff" /><path d="M20 9h4v3h-4z" fill="#fff" /></Svg>
        </Slot>
        <Slot>
          <Svg s={36} vb="0 0 36 36"><path d="M18 1L0 11v24h36V11z" fill="#0f6cbd" /><path d="M0 11h36L18 24z" fill="#f4f8fc" /><path d="M36 13v22H8z" fill="#35c2f6" /><path d="M0 13v22h28z" fill="#1a9ae0" /></Svg>
        </Slot>
        <Slot>
          <Svg s={36} vb="0 0 36 36"><path d="M0 0h36v36H0z" fill="#1ba6d6" /><path d="M13 6h8v18h8v6H8z" fill="#fff" /><path d="M13 6v24H8z" fill="#0c4a8a" /></Svg>
        </Slot>
        <Slot bar>
          <div className="relative">
            <Svg s={36} vb="0 0 36 36"><path d="M18 18L3 9a17 17 0 0130 0z" fill="#dd4b3e" /><path d="M18 18l15-9a17 17 0 01-15 26z" fill="#f7c21a" /><path d="M18 18v17A17 17 0 013 9z" fill="#1da15a" /><circle cx="18" cy="18" r="8" fill="#4a8af0" stroke="#fff" strokeWidth="2.5" /></Svg>
            <div className="absolute -right-[5px] -bottom-[5px] w-[22px] h-[22px] rounded-full bg-[#8f8c84] border border-[#444] flex items-end justify-center overflow-hidden">
              <div className="w-[10px] h-[15px] rounded-t-full bg-[#d8d4cc]" />
            </div>
          </div>
        </Slot>
        <Slot>
          <Svg s={36} vb="0 0 36 36"><path d="M20 1c1 5 8 7 10 10 5 8 3 16-3 20-7 5-17 4-22-2C0 23 0 14 5 9c0 3 1 4 2 5 1-6 7-8 13-13z" fill="#ff6a1f" /><path d="M7 20c1-5 6-9 12-9s10 5 9 10c-1 6-6 10-12 9-5-1-9-5-9-10z" fill="#f0254f" /><circle cx="18" cy="19" r="7" fill="#7b3fd6" /><path d="M9 13c4-3 9-3 12-1l-4 3z" fill="#ffc421" /></Svg>
        </Slot>
        <Slot>
          <Svg s={36} vb="0 0 36 36"><path d="M1 17C2 7 9 1 18 1c10 0 17 7 17 15 0 3-3 5-8 5H14c0-4 5-7 9-7-2-3-6-4-10-3C7 12 3 14 1 17z" fill="#35c46c" /><path d="M1 17C0 27 8 35 18 35c5 0 10-2 13-6-4 2-10 2-14-1-4-2-5-7-3-11 2-4 6-6 9-6-6-4-14-3-18 1-2 1-3 3-4 5z" fill="#0f6cc4" /></Svg>
        </Slot>
        <Slot>
          <Svg s={36} vb="0 0 36 36"><path d="M1 6h13l4 4h16v22H1z" fill="#f5c542" /><path d="M1 13h34v19H1z" fill="#fcdc72" /><path d="M12 18h12v3H12z" fill="#1a7fd0" /></Svg>
        </Slot>
        <Slot>
          <div className="w-[29px] h-[34px] bg-[#2a2a2a] rounded-[2px] rounded-b-[6px] flex flex-col items-center justify-center text-[8.5px] leading-[9px] font-bold text-white">
            <span>EPIC</span><span className="text-[6px] leading-[8px]">GAMES</span>
          </div>
        </Slot>
        <Slot>
          <Svg s={34} vb="0 0 34 28"><path d="M1 1h32v26H1z" fill="#2b2b2b" stroke="#8a8a8a" /><path d="M1 1h32v5H1z" fill="#6a6a6a" /></Svg>
        </Slot>
        <Slot>
          <Svg s={36} vb="0 0 36 36"><circle cx="18" cy="18" r="18" fill="#5865f2" /><path d="M10 12c5-2 11-2 16 0 2 4 3 8 3 12-2 1-4 2-6 2l-1-2H14l-1 2c-2 0-4-1-6-2 0-4 1-8 3-12z" fill="#fff" /><circle cx="14" cy="19" r="2.4" fill="#5865f2" /><circle cx="22" cy="19" r="2.4" fill="#5865f2" /></Svg>
        </Slot>
        <Slot>
          <Svg s={38} vb="0 0 38 38"><path d="M1 1h14v7H8v7H1zM37 1H23v7h7v7h7zM37 37H23v-7h7v-7h7zM15 37V25H8l-4 4 6 6z" fill="#eda91a" /><path d="M14 14h10v10H14z" fill="#bd7f10" /></Svg>
        </Slot>
        <div className="ml-[141px] w-[74px] h-[30px] border-[3px] border-white flex relative bg-black">
          <div className="w-[60%] bg-[#129c52]" />
          <span className="absolute inset-0 text-center text-[19px] leading-[24px]">60%</span>
        </div>
        <div className="w-[3px] h-[14px] bg-white" />
        <Svg s={26} vb="0 0 26 26" className="ml-0"><path d="M14 1c-1 5-5 8-5 14 0 5 3 9 5 10 2-2 3-6 3-10 0-6-3-9-3-14z" fill="#fff" /></Svg>
        <div className="ml-[133px] w-[28px] h-[28px] rounded-full bg-linear-to-b from-[#ffd84d] to-[#f59a0c]" />
        <span className="ml-[16px] w-[130px] text-[21px] whitespace-nowrap text-[#e8e8e8]">65°F Sunny</span>
        <div className="w-[30px] flex justify-center">
          <Svg s={18} vb="0 0 18 18"><path d="M2 13l7-8 7 8" fill="none" stroke="#eee" strokeWidth="1.3" /></Svg>
        </div>
        <div className="w-[3px]" />
        <Tray><path d="M4 3h10v2H4zM4 17h10v2H4zM3 7h9v8H3z" fill="none" stroke="#ddd" strokeWidth="1.2" /><path d="M12 10l5-2v6l-5-2" fill="none" stroke="#ddd" /></Tray>
        <Tray><path d="M7 1h6v12H7z" fill="#e8e8e8" /><path d="M4 9c0 9 12 9 12 0M10 15v5M6 20h8" fill="none" stroke="#e8e8e8" strokeWidth="1.3" /></Tray>
        <Tray><path d="M3 0h14v22H3z" fill="#555" stroke="#999" /><path d="M5 3h10M5 6h10M5 9h10M5 12h10M5 15h10M5 18h10" stroke="#222" /></Tray>
        <Tray><path d="M7 5h11v13H7z" fill="none" stroke="#ddd" strokeWidth="1.4" /><path d="M2 8h7v6H2zM4 2v6M7 2v6" fill="#ddd" stroke="#ddd" /></Tray>
        <Tray><path d="M3 20c0-9 7-15 15-15M7 20c0-6 5-11 11-11M11 20c0-4 3-7 7-7" fill="none" stroke="#aaa" /><circle cx="15" cy="18" r="1.6" fill="#eee" /></Tray>
        <Tray><path d="M1 8h4l5-5v16l-5-5H1z" fill="none" stroke="#ddd" /><path d="M13 7c2 2 2 6 0 8M16 4c3 4 3 10 0 14" fill="none" stroke="#ddd" /></Tray>
        <Tray><path d="M5 1l5 4-5 4-5-4zM15 1l5 4-5 4-5-4zM5 9l5 4-5 4-5-4zM15 9l5 4-5 4-5-4zM10 15l4 3-4 3-4-3z" fill="#f0f0f0" /></Tray>
        <div className="w-[54px] text-center text-[15.5px] text-[#ddd]">ENG</div>
        <div className="w-[104px] flex flex-col items-center text-[17px] leading-[28px] text-[#e4e4e4]">
          <span>1:20 PM</span>
          <span>1/3/2022</span>
        </div>
        <div className="w-[60px] flex justify-center relative">
          <Svg s={26} vb="0 0 26 26"><path d="M2 1h22v19H10l-5 5v-5H2z" fill="#f2f2f2" /><path d="M7 6h12M7 10h12M7 14h8" stroke="#222" strokeWidth="1.2" /></Svg>
          <div className="absolute left-[32px] top-[9px] w-[24px] h-[24px] rounded-full bg-[#2a2a2a] border-2 border-[#888] text-center text-[15px] leading-[20px] text-white">3</div>
        </div>
      </div>
    </>
  );
}

const hatch = "bg-[repeating-conic-gradient(#d4d2ce_0%_25%,#ffffff_0%_50%)] bg-[length:3px_3px]";

export default function App() {
  return (
    <div className="w-[2560px] h-[1600px] overflow-hidden relative flex flex-col bg-[#edebe6]">
      <Vmware />
      <GnomeBar />
      <AppBars />
      <div className="h-[1255px] flex shrink-0">
        <div className="w-[38px] h-full bg-linear-to-r from-white to-[#d8d6d1] flex flex-col pt-[3px]">
          <div className="h-[6px] mx-[4px] border-y border-[#9a9894]" />
          <div className="mt-[2px]">
            {sideTools.map((g, i) => (
              <div key={i} className={`h-[22px] flex items-center pl-[4px] ${i === 0 ? "bg-[#c4c2bd] w-[24px]" : ""}`}>
                <Svg s={17} vb="0 0 21 21">{g}</Svg>
                <div className={`w-0 h-0 shrink-0 border-x-[5px] border-x-transparent border-t-[5px] border-t-black ${i === 0 ? "ml-[5px]" : "ml-[5px]"}`} />
              </div>
            ))}
          </div>
        </div>
        <div className="w-[23px] h-full flex flex-col pl-[4px] font-['DejaVu_Sans',sans-serif] text-[12px] text-[#111]">
          <div className="h-[161px] mt-[-1px] bg-[#b3b1ac] rounded-tl-[4px] flex items-center justify-center"><span className="[writing-mode:vertical-rl] rotate-180 whitespace-nowrap">Vis/Sel Theme: default</span></div>
          <div className="h-[131px] bg-[#b3b1ac] rounded-tl-[4px] mt-[1px] flex items-center justify-center"><span className="[writing-mode:vertical-rl] rotate-180 whitespace-nowrap">Interactive Modes</span></div>
          <div className="h-[120px] bg-linear-to-r from-white to-[#edebe6] rounded-tl-[4px] flex items-center justify-center"><span className="[writing-mode:vertical-rl] rotate-180 whitespace-nowrap">Design Explorer</span></div>
          <div className="h-[2px] bg-[#8a8884]" />
        </div>
        <Explorer />
        <div className="w-[20px] h-full flex items-center pl-[8px] border-r-2 border-[#8a8884]">
          <div className="w-0 h-0 border-y-[7px] border-y-transparent border-r-[7px] border-r-black" />
        </div>
        <div className="flex-1 flex flex-col min-w-0">
          <div className="h-[1225px] flex">
            <div className="flex-1 bg-black pl-[708px] pt-[232px] relative">
              <Chip />
              <svg width="8" height="10" viewBox="0 0 8 10" className="absolute left-[1110px] top-[130px]"><path d="M1 0v8l2-2 2 4 1-1-2-3h3z" fill="#1414e0" /></svg>
            </div>
            <div className={`w-[20px] flex flex-col ${hatch}`}>
              <div className="h-[18px] bg-[#edebe6] border-r border-b border-[#8a8884] flex items-center justify-center">
                <div className="w-0 h-0 border-x-[5px] border-x-transparent border-b-[5px] border-b-black" />
              </div>
              <div className="flex-1 mt-[90px] mb-[720px] bg-[#fafafa]" />
            </div>
          </div>
          <div className={`h-[18px] flex items-center relative ${hatch}`}>
            <div className="w-[16px] h-full bg-[#edebe6] border-r border-b border-[#8a8884] flex items-center justify-center">
              <div className="w-0 h-0 border-y-[4px] border-y-transparent border-r-[4px] border-r-[#999]" />
            </div>
            <div className="absolute left-[1100px] top-[10px] w-0 h-0 border-x-[8px] border-x-transparent border-b-[7px] border-b-black" />
          </div>
          <div className="h-px bg-white" />
          <div className="flex-1 border-b border-[#8a8884]" />
        </div>
      </div>
      <div className="h-[23px] shrink-0 flex items-center pl-[6px] font-['DejaVu_Sans',sans-serif] text-[12px] text-[#111] bg-[#edebe6]">Cell counter/Q_reg[3]</div>
      <Taskbars />
      <div className="absolute left-[1617px] top-[1486px] w-[13px] h-[18px] border-l border-t border-[#999] text-[12px] text-[#333] overflow-hidden font-['DejaVu_Sans',sans-serif]">Po</div>
      <Editor />
    </div>
  );
}
